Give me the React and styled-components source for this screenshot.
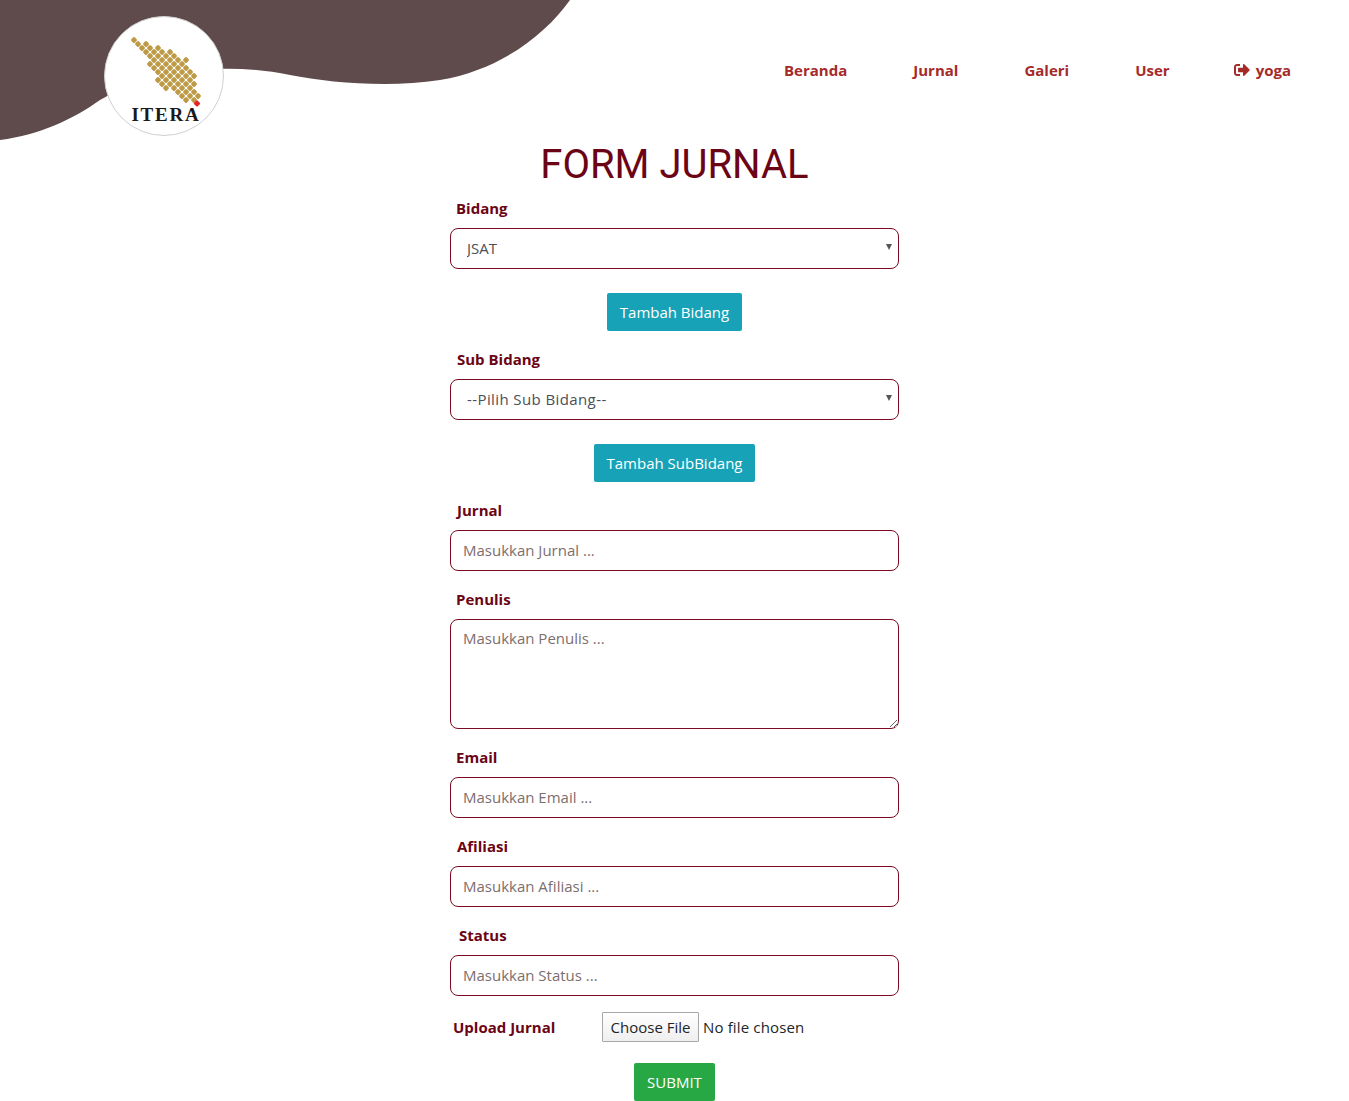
import React from "react";
import styled, { createGlobalStyle } from "styled-components";
import { FaSignOutAlt } from "react-icons/fa";

const GlobalStyle = createGlobalStyle`
  html, body {
    margin: 0;
    background: #fff;
    overflow: hidden;
  }
  body {
    font-family: "Open Sans", "Noto Sans", sans-serif;
    font-size: 15px;
    color: #212529;
  }
  * {
    box-sizing: border-box;
  }
`;

const Page = styled.div`
  position: relative;
  height: 1101px;
  overflow: hidden;
`;

const Wave = styled.svg`
  position: absolute;
  top: 0;
  left: 0;
`;

const Header = styled.header`
  position: relative;
  display: flex;
  justify-content: space-between;
  height: 136px;
  padding: 16px 25px 0 103.5px;
`;

const LogoCircle = styled.div`
  width: 120px;
  height: 120px;
  border-radius: 50%;
  background: #fff;
  border: 1px solid #d0d0d0;
  overflow: hidden;
`;

const Nav = styled.nav`
  display: flex;
  align-items: flex-start;
  padding-top: 42px;
`;

const NavLink = styled.a`
  display: flex;
  align-items: center;
  gap: 6px;
  height: 24px;
  padding: 0 33px;
  color: #a52a2a;
  font-size: 15px;
  font-weight: 700;
  text-decoration: none;
  white-space: nowrap;
  &:last-child {
    padding-left: 31px;
  }
`;

const Form = styled.form`
  position: relative;
  width: 449px;
  margin: 0 auto;
`;

const Title = styled.h1`
  margin: 0;
  height: 60px;
  font-family: Roboto, sans-serif;
  font-size: 40px;
  font-weight: 400;
  line-height: 58px;
  text-align: center;
  color: #6b0515;
`;

const Group = styled.div`
  margin-bottom: ${(p) => p.$gap || 16}px;
`;

const Label = styled.label`
  display: block;
  height: 24px;
  margin-bottom: 8px;
  padding-left: ${(p) => p.$indent || 6}px;
  font-size: 15px;
  font-weight: 700;
  line-height: 24px;
  color: #6b0515;
`;

const fieldStyles = `
  display: block;
  width: 100%;
  border: 1px solid #7b0a22;
  border-radius: 8px;
  background: #fff;
  font-family: inherit;
  font-size: 15px;
  outline: none;
  &::placeholder {
    color: #7d6e6e;
    opacity: 1;
  }
`;

const SelectWrap = styled.div`
  position: relative;
  &::after {
    content: "";
    position: absolute;
    top: 16px;
    right: 7px;
    border-left: 3px solid transparent;
    border-right: 3px solid transparent;
    border-top: 6px solid #555;
    pointer-events: none;
  }
`;

const Select = styled.select`
  ${fieldStyles}
  appearance: none;
  height: 41px;
  padding: 0 24px 1px 16px;
  color: #495057;
  letter-spacing: ${(p) => p.$tracking || 0}px;
`;

const Input = styled.input`
  ${fieldStyles}
  height: 41px;
  padding: 0 12px 2px;
`;

const TextArea = styled.textarea`
  ${fieldStyles}
  height: 110px;
  padding: 7px 12px;
  line-height: 22px;
`;

const ButtonRow = styled.div`
  display: flex;
  justify-content: center;
  margin-top: ${(p) => p.$top || 0}px;
`;

const Button = styled.button`
  height: 38px;
  width: ${(p) => p.$width}px;
  padding: 0;
  border: 0;
  border-radius: 2px;
  color: #fff;
  background: ${(p) => p.$bg};
  font-family: inherit;
  font-size: 15px;
`;

const UploadRow = styled.div`
  display: flex;
  align-items: center;
  height: 30px;
`;

const UploadLabel = styled.label`
  width: 152px;
  padding: 0 0 1px 3px;
  font-size: 15px;
  font-weight: 700;
  color: #6b0515;
`;

const FileInput = styled.input`
  font-family: inherit;
  font-size: 15px;
  letter-spacing: 0.15px;
  color: #212529;
  &::file-selector-button {
    width: 97px;
    height: 30px;
    margin-right: 4px;
    padding: 0 0 1px;
    border: 1px solid #a8a8a8;
    border-radius: 1px;
    background: linear-gradient(#ffffff, #efefef);
    font-family: inherit;
    font-size: 15px;
    letter-spacing: 0;
    color: #212529;
  }
`;

const ISLAND = [
  [0, 0], [0, 0], [-1, 0], [-1, 0], [-2, 0], [-2, 1], [-3, 1], [-3, 1],
  [-3, 2], [-4, 2], [-3, 2], [-3, 1], [-3, 1], [-2, 1], [-1, 1], [-1, 0],
];

function Logo() {
  const dots = [];
  ISLAND.forEach(([from, to], u) => {
    for (let v = from; v <= to; v++) {
      const x = 29 + (u - v) * 4;
      const y = 23 + (u + v) * 4;
      dots.push(<rect key={`${u}-${v}`} x={x - 2.5} y={y - 2.5} width="5" height="5" rx="1.5" fill="#bd9a45" transform={`rotate(45 ${x} ${y})`} />);
    }
  });
  return (
    <LogoCircle>
      <svg width="118" height="118" viewBox="0 0 118 118">
        {dots}
        <rect x="89.5" y="84" width="5" height="5" rx="1" fill="#e3262b" transform="rotate(45 92 86.5)" />
        <text x="61" y="104" textAnchor="middle" fontFamily="'Liberation Serif', serif" fontWeight="700" fontSize="19" letterSpacing="1.8" fill="#1a1a1a">ITERA</text>
      </svg>
    </LogoCircle>
  );
}

export default function App() {
  return (
    <Page>
      <GlobalStyle />
      <Wave width="600" height="145" viewBox="0 0 600 145">
        <path
          d="M0 0H570C545 35 500 70 440 80C390 88 330 83 290 75C265 70 240 68 215 69L150 60C140 80 115 92 100 100C75 118 40 135 0 140Z"
          fill="#5f4b4b"
        />
      </Wave>
      <Header>
        <Logo />
        <Nav>
          <NavLink href="#">Beranda</NavLink>
          <NavLink href="#">Jurnal</NavLink>
          <NavLink href="#">Galeri</NavLink>
          <NavLink href="#">User</NavLink>
          <NavLink href="#">
            <FaSignOutAlt size={16} />
            yoga
          </NavLink>
        </Nav>
      </Header>
      <Form onSubmit={(e) => e.preventDefault()}>
        <Title>FORM JURNAL</Title>
        <Group $gap={24}>
          <Label>Bidang</Label>
          <SelectWrap>
            <Select defaultValue="JSAT">
              <option>JSAT</option>
            </Select>
          </SelectWrap>
        </Group>
        <Group>
          <ButtonRow>
            <Button type="button" $bg="#17a2b8" $width={135}>Tambah Bidang</Button>
          </ButtonRow>
        </Group>
        <Group $gap={24}>
          <Label $indent={7}>Sub Bidang</Label>
          <SelectWrap>
            <Select defaultValue="--Pilih Sub Bidang--" $tracking={0.4}>
              <option>--Pilih Sub Bidang--</option>
            </Select>
          </SelectWrap>
        </Group>
        <Group>
          <ButtonRow>
            <Button type="button" $bg="#17a2b8" $width={161}>Tambah SubBidang</Button>
          </ButtonRow>
        </Group>
        <Group>
          <Label $indent={7}>Jurnal</Label>
          <Input placeholder="Masukkan Jurnal ..." />
        </Group>
        <Group>
          <Label>Penulis</Label>
          <TextArea placeholder="Masukkan Penulis ..." />
        </Group>
        <Group>
          <Label>Email</Label>
          <Input placeholder="Masukkan Email ..." />
        </Group>
        <Group>
          <Label $indent={7}>Afiliasi</Label>
          <Input placeholder="Masukkan Afiliasi ..." />
        </Group>
        <Group>
          <Label $indent={9}>Status</Label>
          <Input placeholder="Masukkan Status ..." />
        </Group>
        <UploadRow>
          <UploadLabel>Upload Jurnal</UploadLabel>
          <FileInput type="file" />
        </UploadRow>
        <ButtonRow $top={21}>
          <Button type="submit" $bg="#28a745" $width={81}>SUBMIT</Button>
        </ButtonRow>
      </Form>
    </Page>
  );
}
